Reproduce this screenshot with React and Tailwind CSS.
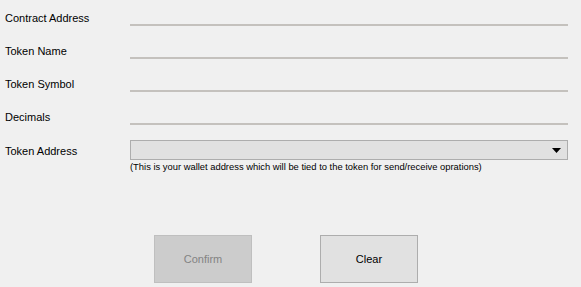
import React from 'react';

const fields = ['Contract Address', 'Token Name', 'Token Symbol', 'Decimals'];

export default function App() {
    return (
        <div
            className="w-[581px] h-[287px] bg-[#f0f0f0] text-[11px] text-black overflow-hidden"
            style={{ fontFamily: "'Liberation Sans', Arial, sans-serif" }}
        >
            <div className="flex flex-col pt-[10px]">
                {fields.map((label) => (
                    <div key={label} className="flex h-[33px]">
                        <div className="w-[130px] shrink-0 pl-[5px] pt-[1px] leading-[14px]">{label}</div>
                        <div className="w-[438px] h-[16px] border-b-2 border-[#c4c1bd]" />
                    </div>
                ))}

                {/* Token address dropdown */}
                <div className="flex mt-[-2px]">
                    <div className="w-[130px] shrink-0 pl-[5px] pt-[4px] leading-[14px]">Token Address</div>
                    <div className="flex flex-col">
                        <div className="w-[438px] h-[20px] bg-[#e1e1e1] border border-[#adadad] flex items-center justify-end pr-[6px]">
                            <svg width="9" height="5" viewBox="0 0 9 5">
                                <path d="M0 0h9L4.5 5z" fill="#000" />
                            </svg>
                        </div>
                        <div className="text-[9.4px] leading-[13px]">
                            (This is your wallet address which will be tied to the token for send/receive oprations)
                        </div>
                    </div>
                </div>

                <div className="flex gap-[68px] pl-[154px] mt-[62px]">
                    <button className="w-[98px] h-[48px] bg-[#cccccc] border border-[#bfbfbf] text-[#838383]">
                        Confirm
                    </button>
                    <button className="w-[98px] h-[48px] bg-[#e1e1e1] border border-[#adadad] text-black">
                        Clear
                    </button>
                </div>
            </div>
        </div>
    );
}
